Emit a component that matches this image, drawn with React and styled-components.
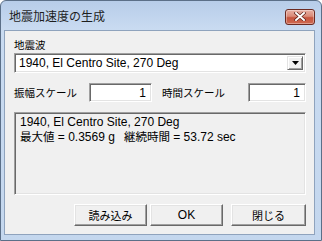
import React from "react";
import styled, { createGlobalStyle } from "styled-components";

const Global = createGlobalStyle`
  html, body { margin: 0; padding: 0; background: #ffffff; }
  body { width: 322px; height: 241px; overflow: hidden; }
  * { box-sizing: border-box; }
`;

const Window = styled.div`
  width: 322px;
  height: 241px;
  display: flex;
  flex-direction: column;
  background: linear-gradient(180deg, #b7cde9 0px, #c9dbf1 28px, #c4d7ee 100%);
  border: 1px solid #5b6f88;
  border-radius: 6px 6px 0 0;
  padding: 0 6px 5px 3px;
  font-family: "Liberation Sans", "Noto Sans CJK JP", sans-serif;
  color: #000;
`;

const TitleBar = styled.div`
  height: 29px;
  display: flex;
  align-items: center;
  justify-content: space-between;
  padding-left: 5px;
`;

const Title = styled.div`
  font-family: "Noto Sans CJK JP", sans-serif;
  font-size: 12px;
  line-height: 14px;
  color: #1e1e1e;
  margin-top: 1px;
`;

const CloseButton = styled.div`
  width: 30px;
  height: 16px;
  margin-top: 2px;
  border: 1px solid #6b2a22;
  border-radius: 3px;
  background: linear-gradient(180deg, #e8b0a4 0%, #d98a78 45%, #c6553f 55%, #cf6a52 100%);
  box-shadow: inset 0 0 0 1px rgba(255, 255, 255, 0.35);
  display: flex;
  align-items: center;
  justify-content: center;
`;

const Client = styled.div`
  flex: 1;
  background: #f0f0f0;
  border: 1px solid #8fa3bd;
  padding: 7px 8px 0 9px;
  display: flex;
  flex-direction: column;
`;

const Label = styled.div`
  font-family: "Noto Sans CJK JP", sans-serif;
  font-size: 10.5px;
  line-height: 14px;
  height: 14px;
  white-space: nowrap;
  width: ${(p) => p.$w || "auto"};
`;

const Sunken = styled.div`
  background: ${(p) => p.$bg || "#ffffff"};
  border-top: 1px solid #a0a0a0;
  border-left: 1px solid #a0a0a0;
  border-right: 1px solid #ffffff;
  border-bottom: 1px solid #ffffff;
  box-shadow: inset 1px 1px 0 #696969, inset -1px -1px 0 #e3e3e3;
`;

const Combo = styled(Sunken)`
  height: 20px;
  margin-top: 1px;
  display: flex;
  align-items: center;
  justify-content: space-between;
  padding: 2px 2px 2px 4px;
  font-size: 12px;
`;

const DropButton = styled.div`
  width: 16px;
  height: 14px;
  background: #f0f0f0;
  border-top: 1px solid #e3e3e3;
  border-left: 1px solid #e3e3e3;
  border-right: 1px solid #696969;
  border-bottom: 1px solid #696969;
  box-shadow: inset 1px 1px 0 #ffffff, inset -1px -1px 0 #a0a0a0;
  display: flex;
  align-items: center;
  justify-content: center;
`;

const ScaleRow = styled.div`
  display: flex;
  align-items: center;
  margin-top: 10px;
  height: 19px;
`;

const NumberBox = styled(Sunken)`
  width: ${(p) => p.$w};
  height: 19px;
  margin-right: ${(p) => p.$mr || "0px"};
  font-size: 12px;
  text-align: right;
  padding: 2px 5px 0 0;
  line-height: 14px;
`;

const InfoBox = styled(Sunken)`
  margin-top: 10px;
  height: 83px;
  background: #f0f0f0;
  padding: 2px 5px;
  font-size: 12px;
  line-height: 14px;
`;

const InfoLine = styled.div`
  white-space: nowrap;
  height: 14px;
  line-height: 14px;
  font-family: "Liberation Sans", "Noto Sans CJK JP", sans-serif;
`;

const Jp = styled.span`
  font-family: "Noto Sans CJK JP", sans-serif;
  font-size: 11.5px;
  line-height: 14px;
`;

const Gap = styled.span`
  display: inline-block;
  width: 9px;
`;

const ButtonRow = styled.div`
  display: flex;
  justify-content: flex-end;
  gap: ${(p) => p.$gap};
  margin-top: 9px;
`;

const Button = styled.div`
  width: ${(p) => p.$w || "73px"};
  height: 22px;
  margin-left: ${(p) => p.$ml || "0px"};
  background: #f0f0f0;
  border-top: 1px solid #ffffff;
  border-left: 1px solid #ffffff;
  border-right: 1px solid #696969;
  border-bottom: 1px solid #696969;
  box-shadow: inset -1px -1px 0 #a0a0a0, inset 1px 1px 0 #e3e3e3;
  display: flex;
  align-items: center;
  justify-content: center;
  font-family: ${(p) => (p.$latin ? '"Liberation Sans", sans-serif' : '"Noto Sans CJK JP", sans-serif')};
  font-size: ${(p) => (p.$latin ? "12px" : "11px")};
`;

export default function App() {
  return (
    <>
      <Global />
      <Window>
        <TitleBar>
          <Title>地震加速度の生成</Title>
          <CloseButton>
            <svg width="12" height="9" viewBox="0 0 12 9">
              <path d="M2 1 L10 8 M10 1 L2 8" stroke="#5a1d15" strokeWidth="3.2" strokeLinecap="square" />
              <path d="M2 1 L10 8 M10 1 L2 8" stroke="#ffffff" strokeWidth="2" strokeLinecap="square" />
            </svg>
          </CloseButton>
        </TitleBar>
        <Client>
          <Label>地震波</Label>
          <Combo>
            <span>1940, El Centro Site, 270 Deg</span>
            <DropButton>
              <svg width="7" height="4" viewBox="0 0 7 4">
                <path d="M0 0 H7 L3.5 4 Z" fill="#000" />
              </svg>
            </DropButton>
          </Combo>
          <ScaleRow>
            <Label $w="75px">振幅スケール</Label>
            <NumberBox $w="63px" $mr="10px">1</NumberBox>
            <Label $w="86px">時間スケール</Label>
            <NumberBox $w="58px">1</NumberBox>
          </ScaleRow>
          <InfoBox>
            <InfoLine>1940, El Centro Site, 270 Deg</InfoLine>
            <InfoLine>
              <Jp>最大値</Jp> = 0.3569 g<Gap /><Jp>継続時間</Jp> = 53.72 sec
            </InfoLine>
          </InfoBox>
          <ButtonRow $gap="3px">
            <Button>読み込み</Button>
            <Button $latin>OK</Button>
            <Button $ml="5px" $w="75px">閉じる</Button>
          </ButtonRow>
        </Client>
      </Window>
    </>
  );
}
